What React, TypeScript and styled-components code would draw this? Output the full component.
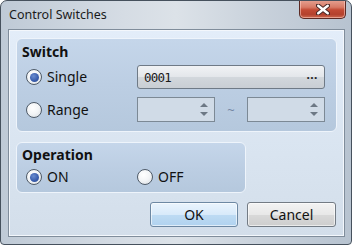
import React, { FC } from 'react';
import { styled, createGlobalStyle } from 'styled-components';

const GlobalStyle = createGlobalStyle`
  html, body {
    margin: 0;
    padding: 0;
    background: #ffffff;
  }
  * {
    box-sizing: border-box;
  }
`;

const Window = styled.div`
  width: 352px;
  height: 245px;
  border: 1px solid #46515d;
  border-radius: 7px 7px 4px 4px;
  background: linear-gradient(90deg, #bfcad6 0%, #d5dce4 35%, #dce2e8 50%, #c8d1db 75%, #b7c3d0 100%);
  display: flex;
  flex-direction: column;
  padding: 0 6px 7px 7px;
  font-family: 'Noto Sans', 'Open Sans', sans-serif;
  color: #000;
  overflow: hidden;
`;

const TitleBar = styled.div`
  height: 28px;
  display: flex;
  align-items: flex-start;
  justify-content: space-between;
  margin-right: -1px;
`;

const Title = styled.span`
  font-size: 12.5px;
  line-height: 28px;
  color: #1b1b1b;
  padding-left: 1px;
`;

const CloseButton = styled.div`
  width: 47px;
  height: 19px;
  margin-top: -1px;
  border: 1px solid #5c2a24;
  border-top: none;
  border-radius: 0 0 5px 5px;
  background: linear-gradient(180deg, #e6a393 0%, #d77a66 40%, #c24a34 55%, #b4412d 80%, #cc6a50 100%);
  box-shadow: inset 0 0 0 1px rgba(255, 210, 200, 0.55);
  display: flex;
  align-items: center;
  justify-content: center;
`;

const Client = styled.div`
  flex: 1;
  border: 1px solid #808d9b;
  box-shadow: inset 0 0 0 1px #f3f7fc;
  background: linear-gradient(180deg, #e3edf9 0%, #d9e4f0 60%, #d3deea 100%);
  padding: 8px 7px 8px 7px;
  display: flex;
  flex-direction: column;
`;

const Group = styled.div<{ $width?: number; $pad: string }>`
  width: ${(p) => (p.$width ? `${p.$width}px` : 'auto')};
  border: 1px solid #eef4fb;
  border-radius: 6px;
  background: linear-gradient(180deg, #c5d6ea 0%, #bccee3 50%, #b5c8dd 100%);
  padding: ${(p) => p.$pad};
  display: flex;
  flex-direction: column;
`;

const GroupTitle = styled.div`
  font-size: 14px;
  font-weight: 700;
  line-height: 18px;
  color: #111;
`;

const FieldGrid = styled.div<{ $rowGap: number }>`
  display: grid;
  grid-template-columns: 111px 1fr;
  row-gap: ${(p) => p.$rowGap}px;
  padding-left: 4px;
  align-items: center;
`;

const RadioLabel = styled.label`
  display: flex;
  align-items: center;
  gap: 5px;
  font-size: 14px;
  line-height: 20px;
  color: #111;
`;

const RadioCircle = styled.span<{ $checked?: boolean }>`
  width: 16px;
  height: 16px;
  border-radius: 50%;
  border: 1px solid #4f5b68;
  background: radial-gradient(circle at 40% 35%, #ffffff 0%, #f2f4f6 50%, #d4d9de 100%);
  display: flex;
  align-items: center;
  justify-content: center;
  flex: none;

  &::after {
    content: '';
    display: ${(p) => (p.$checked ? 'block' : 'none')};
    width: 9px;
    height: 9px;
    border-radius: 50%;
    background: radial-gradient(circle at 40% 35%, #6a8cd0 0%, #3b5fae 55%, #2a4a92 100%);
  }
`;

const SelectBox = styled.div`
  height: 24px;
  border: 1px solid #6f7a86;
  border-radius: 3px;
  background: linear-gradient(180deg, #f1f3f5 0%, #e3e6ea 50%, #d2d7dc 51%, #c9ced4 100%);
  display: flex;
  align-items: center;
  justify-content: space-between;
  padding: 0 6px 0 6px;
`;

const Code = styled.span`
  font-family: 'DejaVu Sans Mono', 'Liberation Mono', monospace;
  font-size: 12.5px;
  letter-spacing: -0.8px;
  color: #1a1a1a;
`;

const Dots = styled.span`
  font-size: 12px;
  font-weight: 700;
  letter-spacing: 0.5px;
  line-height: 12px;
  margin-top: -4px;
  color: #222;
`;

const RangeRow = styled.div`
  display: grid;
  grid-template-columns: 78px 1fr 78px;
  align-items: center;
`;

const SpinBox = styled.div`
  height: 25px;
  border: 1px solid #7c8995;
  background: #d0dbe7;
  display: flex;
  justify-content: flex-end;
  align-items: center;
  padding-right: 6px;
`;

const SpinArrows = styled.div`
  display: flex;
  flex-direction: column;
  gap: 5px;
`;

const Arrow = styled.span<{ $up?: boolean }>`
  width: 0;
  height: 0;
  border-left: 4px solid transparent;
  border-right: 4px solid transparent;
  ${(p) => (p.$up ? 'border-bottom: 4px solid #6c7885;' : 'border-top: 4px solid #6c7885;')}
`;

const Tilde = styled.span`
  text-align: center;
  font-size: 13px;
  color: #7386a3;
`;

const ButtonRow = styled.div`
  display: flex;
  justify-content: flex-end;
  gap: 9px;
  padding-right: 1px;
`;

const DialogButton = styled.div<{ $default?: boolean; $width: number }>`
  width: ${(p) => p.$width}px;
  height: 25px;
  border: 1px solid ${(p) => (p.$default ? '#6d88a3' : '#737b84')};
  border-radius: 3px;
  background: ${(p) =>
    p.$default
      ? 'linear-gradient(180deg, #eaf4fd 0%, #d8eafa 50%, #bedbf3 51%, #b0d2ef 100%)'
      : 'linear-gradient(180deg, #f3f3f3 0%, #e8e8e8 50%, #d9d9d9 51%, #cdcdcd 100%)'};
  box-shadow: inset 0 0 0 1px rgba(255, 255, 255, 0.6);
  display: flex;
  align-items: center;
  justify-content: center;
  font-size: 14px;
  color: #111;
`;

const Radio: FC<{ label: string; checked?: boolean }> = ({ label, checked }) => (
  <RadioLabel>
    <RadioCircle $checked={checked} />
    {label}
  </RadioLabel>
);

const Spin: FC = () => (
  <SpinBox>
    <SpinArrows>
      <Arrow $up />
      <Arrow />
    </SpinArrows>
  </SpinBox>
);

const CloseGlyph: FC = () => (
  <svg width="14" height="11" viewBox="0 0 14 11">
    <path d="M2 1.5 L12 9.5 M12 1.5 L2 9.5" stroke="#4a2a28" strokeWidth="4.4" strokeLinecap="round" />
    <path d="M2.2 1.7 L11.8 9.3 M11.8 1.7 L2.2 9.3" stroke="#ffffff" strokeWidth="2.4" strokeLinecap="round" />
  </svg>
);

const App: FC = () => (
  <>
    <GlobalStyle />
    <Window>
      <TitleBar>
        <Title>Control Switches</Title>
        <CloseButton>
          <CloseGlyph />
        </CloseButton>
      </TitleBar>
      <Client>
        <Group $pad="4px 11px 9px 5px">
          <GroupTitle>Switch</GroupTitle>
          <FieldGrid $rowGap={8} style={{ marginTop: 4 }}>
            <Radio label="Single" checked />
            <SelectBox>
              <Code>0001</Code>
              <Dots>...</Dots>
            </SelectBox>
            <Radio label="Range" />
            <RangeRow>
              <Spin />
              <Tilde>~</Tilde>
              <Spin />
            </RangeRow>
          </FieldGrid>
        </Group>
        <Group $width={230} $pad="3px 11px 5px 5px" style={{ marginTop: 10 }}>
          <GroupTitle>Operation</GroupTitle>
          <FieldGrid $rowGap={0} style={{ marginTop: 3 }}>
            <Radio label="ON" checked />
            <Radio label="OFF" />
          </FieldGrid>
        </Group>
        <ButtonRow style={{ marginTop: 9 }}>
          <DialogButton $default $width={88}>OK</DialogButton>
          <DialogButton $width={89}>Cancel</DialogButton>
        </ButtonRow>
      </Client>
    </Window>
  </>
);

export default App;
